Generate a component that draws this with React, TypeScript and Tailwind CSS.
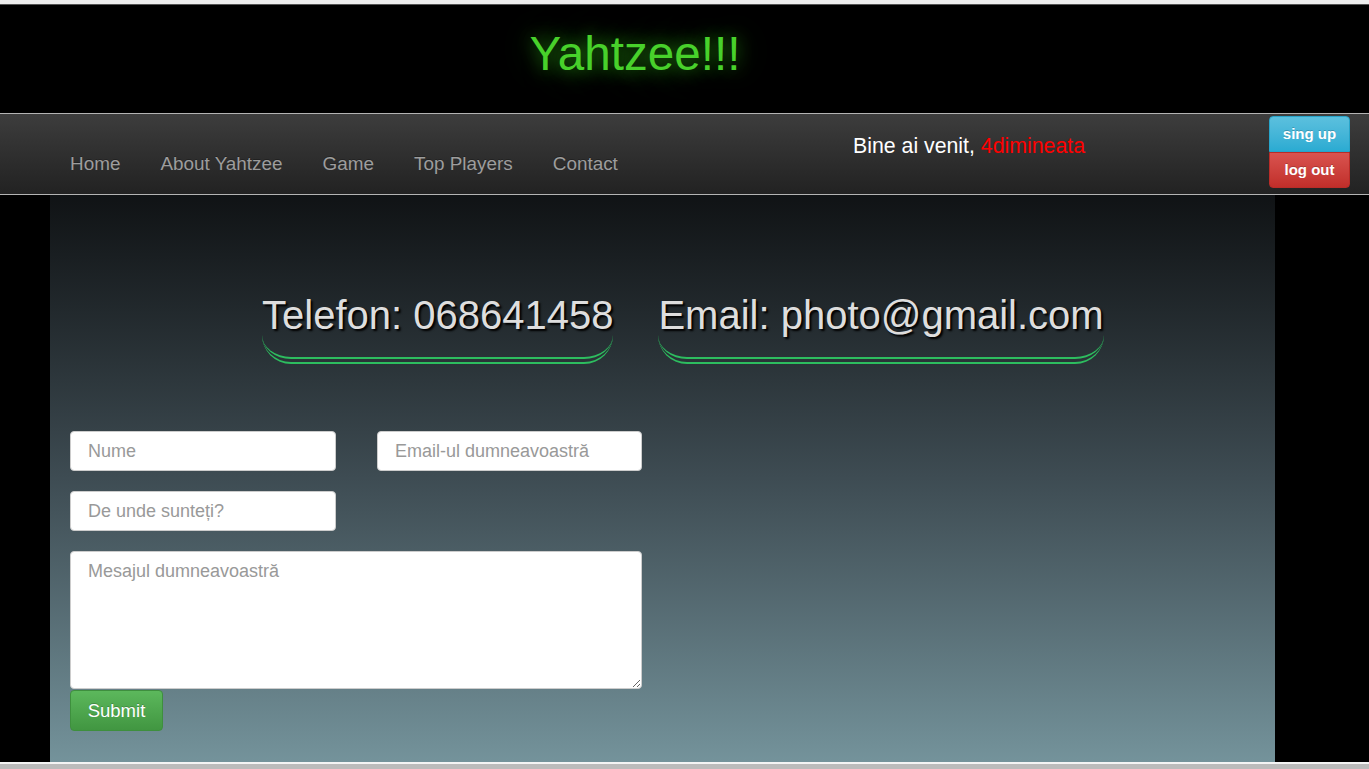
import React from "react";

export default function App() {
  const font = "font-['Liberation_Sans',Arial,Helvetica,sans-serif]";
  return (
    <div className={`min-h-screen bg-black ${font}`}>
      <div className="h-[5px] bg-[#eeeeee] border-b border-[#555555]" />
      <header className="h-[108px] flex items-center justify-center pr-[99px]">
        <h1 className="text-[47.6px] leading-[54px] text-[#48d12b] [text-shadow:0_0_18px_#2b8a14,0_0_36px_#154f0a] mt-[-10px]">
          Yahtzee!!!
        </h1>
      </header>
      <nav className="h-[82px] border-y border-[#b4b4b4] bg-gradient-to-b from-[#3d3d3d] to-[#222222] flex items-start">
        <ul className="w-[853px] flex pl-[50px] pt-[39px]">
          {["Home", "About Yahtzee", "Game", "Top Players", "Contact"].map((l) => (
            <li key={l} className="px-[20px] text-[18.9px] leading-[21px] text-[#9d9d9d] [text-shadow:0_-1px_0_rgba(0,0,0,0.25)]">
              {l}
            </li>
          ))}
        </ul>
        <div className="pt-[20px] text-[21.3px] leading-[24px] text-white">
          Bine ai venit, <span className="text-[#ff0000]">4dimineata</span>
        </div>
        <div className="ml-auto mr-[19px] mt-[2px] flex flex-col w-[81px]">
          <div className="h-[36px] rounded-t-[4px] border border-[#28a4c9] bg-gradient-to-b from-[#5bc0de] to-[#2aabd2] text-white text-[15px] font-bold flex items-center justify-center [text-shadow:0_-1px_0_rgba(0,0,0,0.2)]">
            sing up
          </div>
          <div className="h-[36px] rounded-b-[4px] border border-[#b92c28] bg-gradient-to-b from-[#d9534f] to-[#c12e2a] text-white text-[15px] font-bold flex items-center justify-center [text-shadow:0_-1px_0_rgba(0,0,0,0.2)]">
            log out
          </div>
        </div>
      </nav>
      <main className="ml-[50px] w-[1225px] h-[567px] bg-gradient-to-b from-[#101315] via-[#3e4c53] to-[#74939b]">
        <div className="flex pl-[212px] pt-[97px] gap-[45px]">
          {["Telefon: 068641458", "Email: photo@gmail.com"].map((t) => (
            <h2
              key={t}
              className="text-[40px] leading-[46px] text-[#dedede] [text-shadow:2px_2px_2px_#000] pb-[19px] border-b-[7px] border-double border-[#2dbd5f] rounded-b-[29px]"
            >
              {t}
            </h2>
          ))}
        </div>
        <form className="pl-[20px] pt-[67px] flex flex-col">
          <div className="flex gap-[41px]">
            <input
              className="w-[266px] h-[40px] bg-white rounded-[4px] border border-[#cccccc] px-[17px] text-[18px] text-[#555] placeholder:text-[#999999] outline-none"
              placeholder="Nume"
            />
            <input
              className="w-[265px] h-[40px] bg-white rounded-[4px] border border-[#cccccc] px-[17px] text-[18px] text-[#555] placeholder:text-[#999999] outline-none"
              placeholder="Email-ul dumneavoastră"
            />
          </div>
          <input
            className="mt-[20px] w-[266px] h-[40px] bg-white rounded-[4px] border border-[#cccccc] px-[17px] text-[18px] text-[#555] placeholder:text-[#999999] outline-none"
            placeholder="De unde sunteți?"
          />
          <textarea
            className="mt-[20px] w-[572px] h-[138px] bg-white rounded-[4px] border border-[#cccccc] px-[17px] pt-[8px] text-[18px] leading-[22px] text-[#555] placeholder:text-[#999999] outline-none"
            placeholder="Mesajul dumneavoastră"
          />
          <button
            type="button"
            className="mt-[1px] w-[93px] h-[41px] rounded-[4px] border border-[#3e8f3e] bg-gradient-to-b from-[#5cb85c] to-[#419641] text-white text-[18.5px] [text-shadow:0_-1px_0_rgba(0,0,0,0.2)]"
          >
            Submit
          </button>
        </form>
      </main>
      <div className="h-[2px] bg-[#f4f4f4]" />
      <div className="h-[5px] bg-[#bbbbbb]" />
    </div>
  );
}
